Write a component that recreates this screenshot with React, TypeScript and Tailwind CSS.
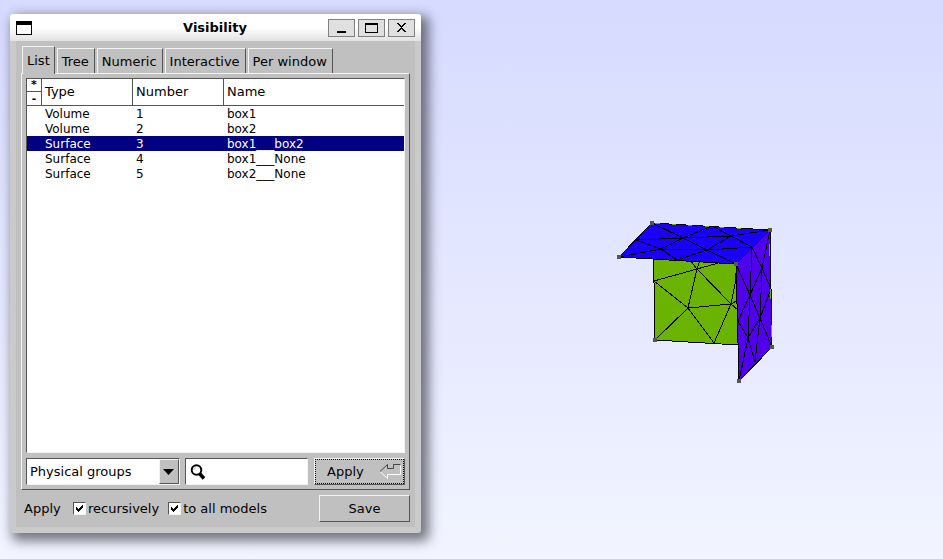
import React, { useState } from "react";

type Row = { type: string; number: number; name: string };

const rows: Row[] = [
  { type: "Volume", number: 1, name: "box1" },
  { type: "Volume", number: 2, name: "box2" },
  { type: "Surface", number: 3, name: "box1___box2" },
  { type: "Surface", number: 4, name: "box1___None" },
  { type: "Surface", number: 5, name: "box2___None" },
];

const tabs = ["List", "Tree", "Numeric", "Interactive", "Per window"];

const sunken =
  "border border-t-[#555555] border-l-[#555555] border-r-[#f4f4f4] border-b-[#f4f4f4]";
const raised =
  "border border-t-[#f4f4f4] border-l-[#f4f4f4] border-r-[#555555] border-b-[#555555]";

function TitleBar() {
  const button =
    "flex h-[18px] w-[27px] items-center justify-center border border-[#808080] bg-[#e0e0e0]";
  return (
    <header className="flex h-[27px] items-center rounded-t-[3px] bg-linear-to-b from-white from-50% to-[#e2e2e2] pr-[6px] pl-[6px]">
      <svg width="16" height="14" shapeRendering="crispEdges" aria-hidden="true">
        <rect width="16" height="14" fill="#000" />
        <rect x="1" y="4" width="14" height="9" fill="#fff" />
      </svg>
      <h1 className="flex-1 pl-[70px] text-center text-[13px] font-bold">Visibility</h1>
      <div className="flex gap-[3px]">
        <button className={button} aria-label="Minimize">
          <svg width="13" height="12" shapeRendering="crispEdges">
            <rect x="2" y="9" width="9" height="2" />
          </svg>
        </button>
        <button className={button} aria-label="Maximize">
          <svg width="13" height="10" shapeRendering="crispEdges">
            <path d="M0 0h13v10H0zM1 2v7h11V2z" fillRule="evenodd" />
          </svg>
        </button>
        <button className={button} aria-label="Close">
          <svg width="9" height="9" viewBox="0 0 9 9" shapeRendering="crispEdges">
            <path d="M0 0h2v1h1v1h1v1h1v-1h1v-1h1v-1h2v1h-1v1h-1v1h-1v1h-1v1h1v1h1v1h1v1h1v1h-2v-1h-1v-1h-1v-1h-1v1h-1v1h-1v1h-2v-1h1v-1h1v-1h1v-1h1v-1h-1v-1h-1v-1h-1v-1h-1z" />
          </svg>
        </button>
      </div>
    </header>
  );
}

function GroupTable() {
  const [selected, setSelected] = useState(3);
  const head =
    "h-[27px] border-b border-l border-[#555555] pl-[3px] text-left text-[13px] font-normal";
  const cell = "h-[15px] p-0 pt-px pl-1";
  return (
    <div className={`h-[375px] bg-white ${sunken}`}>
      <table className="w-full table-fixed border-separate border-spacing-0">
        <colgroup>
          <col className="w-[14px]" />
          <col className="w-[91px]" />
          <col className="w-[91px]" />
          <col />
        </colgroup>
        <thead>
          <tr>
            <th className="h-[27px] border-b border-[#555555] p-0">
              <div className="flex flex-col text-[11px] leading-[12px] font-bold">
                <button className="h-[13px] border-b border-[#555555]">*</button>
                <button className="h-[13px]">-</button>
              </div>
            </th>
            <th className={head}>Type</th>
            <th className={head}>Number</th>
            <th className={head}>Name</th>
          </tr>
        </thead>
        <tbody className="text-[12px] leading-[14px]">
          {rows.map((row) => (
            <tr
              key={row.number}
              onClick={() => setSelected(row.number)}
              className={row.number === selected ? "bg-[#000080] text-white" : ""}
            >
              <td className="h-[15px] p-0" />
              <td className={cell}>{row.type}</td>
              <td className={cell}>{row.number}</td>
              <td className={cell}>{row.name}</td>
            </tr>
          ))}
        </tbody>
      </table>
    </div>
  );
}

function Check({ id, label }: { id: string; label: string }) {
  return (
    <span className="flex items-center">
      <span className="grid">
        <input
          id={id}
          type="checkbox"
          defaultChecked
          className={`peer col-start-1 row-start-1 size-[13px] appearance-none bg-white ${sunken}`}
        />
        <svg
          viewBox="0 0 13 13"
          shapeRendering="crispEdges"
          className="pointer-events-none invisible col-start-1 row-start-1 size-[13px] peer-checked:visible"
        >
          <path d="M3 5h1v1h1v1h1v-1h1v-1h1v-1h1v-1h1v3h-1v1h-1v1h-1v1h-1v1h-1v-1h-1v-1h-1z" />
        </svg>
      </span>
      <label htmlFor={id} className="pl-[2px]">{label}</label>
    </span>
  );
}

function VisibilityWindow() {
  return (
    <section className="absolute top-[14px] left-[10px] w-[411px] rounded-[3px] bg-[#cacaca] shadow-[5px_5px_12px_3px_rgba(50,50,60,0.65)]">
      <TitleBar />
      <div className="mx-[6px] bg-[#c0c0c0] p-[5px]">
        <div role="tablist" className="flex items-end gap-[2px] pl-[1px]">
          {tabs.map((tab, i) => (
            <button
              key={tab}
              role="tab"
              aria-selected={i === 0}
              className={
                i === 0
                  ? "z-10 -mb-px h-[28px] border-t border-r border-l border-t-[#f4f4f4] border-r-[#555555] border-l-[#f4f4f4] bg-[#c0c0c0] px-1"
                  : "h-[25px] border-t border-r border-l border-t-[#f4f4f4] border-r-[#555555] border-l-[#f4f4f4] pt-[2px] pr-[5px] pl-1"
              }
            >
              {tab}
            </button>
          ))}
        </div>
        <div className={`p-1 ${raised}`}>
          <GroupTable />
          <div className="mt-[5px] flex h-[27px]">
            <div className={`grid w-[154px] grid-cols-[1fr_20px] bg-white ${sunken}`}>
              <select
                aria-label="Entity kind"
                className="col-span-2 col-start-1 row-start-1 appearance-none bg-transparent pl-[3px] outline-none"
              >
                <option>Physical groups</option>
              </select>
              <span
                className={`pointer-events-none col-start-2 row-start-1 flex items-center justify-center bg-[#c0c0c0] pr-px ${raised}`}
              >
                <svg width="11" height="6" aria-hidden="true">
                  <path d="M0 0h11L5.500 6z" />
                </svg>
              </span>
            </div>
            <div className={`ml-[5px] flex w-[123px] items-center bg-white pl-1 ${sunken}`}>
              <svg width="15" height="16" viewBox="0 0 15 16" aria-hidden="true">
                <circle cx="6.500" cy="6" r="4.800" fill="none" stroke="#000" strokeWidth="2" />
                <path d="M9.500 9.500l4.500 5" stroke="#000" strokeWidth="3.600" />
                <path d="M4 6a3 3 0 0 1 2-2.500" fill="none" stroke="#bbb" />
              </svg>
              <input aria-label="Search" className="min-w-0 flex-1 bg-transparent px-1 outline-none" />
            </div>
            <button className={`ml-[6px] flex flex-1 ${raised}`}>
              <span className="flex h-full flex-1 items-center justify-between border border-dotted border-black pr-[1px] pl-[11px]">
                Apply
                <svg width="23" height="17" viewBox="0 0 23 17" fill="none" aria-hidden="true">
                  <path d="M8.500 11.500v4L1 8.500M8.500 11.500h13v-10" stroke="#fff" />
                  <path d="M1 8.500l7.500-7v4h6v-4h7" stroke="#444" />
                </svg>
              </span>
            </button>
          </div>
        </div>
        <div className="mt-[5px] flex h-[27px] items-center pl-[3px]">
          <span className="w-[49px]">Apply</span>
          <Check id="recursively" label="recursively" />
          <span className="w-[9px]" />
          <Check id="all-models" label="to all models" />
          <button className={`ml-auto h-[27px] w-[91px] ${raised}`}>Save</button>
        </div>
      </div>
      <div className="h-[6px]" />
    </section>
  );
}

const topEdges =
  "M652 223L683 238L712 226L731 236L770 230M636 240L683 238L731 236L752 247M683 238L707 250L731 236M636 240L661 249L683 238M619 257L661 249L707 250L752 247M661 249L677 260L707 250L736 264";
const sideEdges =
  "M752 247L750 295L748 338L755 362L760 318L762 268L752 247M770 230L762 268L750 295L738 321L748 338L739 381M736 264L750 295L760 318L772 347M762 268L771 289L760 318L748 338";
const backEdges =
  "M654 281L697 269L688 308L731 304L697 269L690 260M697 269L700 260M697 269L722 262M654 281L688 308L655 340M688 308L714 343L731 304L735 284L737 262M731 304L738 300M731 304L738 310";
const corners = [
  [652, 223],
  [770, 230],
  [619, 257],
  [736, 264],
  [655, 340],
  [739, 381],
  [772, 347],
];

function Mesh() {
  return (
    <svg
      viewBox="610 215 170 175"
      className="absolute top-[215px] left-[610px] h-[175px] w-[170px]"
      shapeRendering="crispEdges"
      stroke="#000"
      strokeWidth="1"
      role="img"
      aria-label="Surface mesh"
    >
      <path d="M653 224L770 230L772 347L738 345L655 340z" fill="#6ab300" />
      <path d={backEdges} fill="none" />
      <path d="M652 223L770 230L736 264L619 257z" fill="#1a00f5" />
      <path d={topEdges} fill="none" />
      <path d="M736 264L770 230L772 347L739 381z" fill="#5000eb" />
      <path d={sideEdges} fill="none" />
      <path d="M655 223.500h5M672 224.500h4M688 225.500h4M705 226.500h4M720 227.500h4M737 228.500h4M769.500 244v12M770.500 289v10M771.500 325v12" stroke="#6ab300" />
      {corners.map(([x, y]) => (
        <rect key={`${x}-${y}`} x={x - 2} y={y - 2} width="4" height="4" fill="#555" stroke="none" />
      ))}
    </svg>
  );
}

export default function App() {
  return (
    <main className="relative min-h-screen overflow-hidden bg-linear-to-b from-[#d6dbff] to-[#f2f4ff] font-['DejaVu_Sans',sans-serif] text-[13px] leading-4 text-black">
      <Mesh />
      <VisibilityWindow />
    </main>
  );
}
